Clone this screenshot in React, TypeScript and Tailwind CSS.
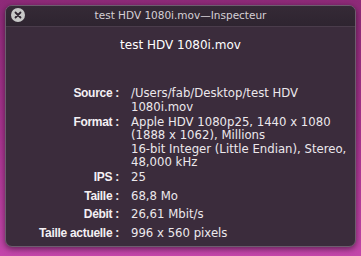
import React from "react";

const rows: { label: string; lines: string[] }[] = [
    { label: "Source :", lines: ["/Users/fab/Desktop/test HDV", "1080i.mov"] },
    { label: "Format :", lines: ["Apple HDV 1080p25, 1440 x 1080", "(1888 x 1062), Millions", "16-bit Integer (Little Endian), Stereo,", "48,000 kHz"] },
    { label: "IPS :", lines: ["25"] },
    { label: "Taille :", lines: ["68,8 Mo"] },
    { label: "Débit :", lines: ["26,61 Mbit/s"] },
    { label: "Taille actuelle :", lines: ["996 x 560 pixels"] },
]

export default function App() {
    return (
        <div className="w-[361px] h-[256px] overflow-hidden bg-gradient-to-b from-[#8e2a78] via-[#a8338f] to-[#c446ab] pt-[5px] px-[5px] font-['DejaVu_Sans',sans-serif]">
            <div className="h-[242px] rounded-[7px] border border-[#6d5d6e] bg-[#3b2c3c] shadow-[0_2px_6px_rgba(0,0,0,0.5)] overflow-hidden">
                {/* title bar */}
                <div className="relative h-[21px] flex items-center justify-center bg-gradient-to-b from-[#352a36] to-[#2e2430] border-b border-[#4a3c4b]">
                    <div className="absolute left-[5px] top-[2px] w-[14px] h-[14px] rounded-full bg-[#c8c8c8] flex items-center justify-center">
                        <svg width="8" height="8" viewBox="0 0 8 8">
                            <path d="M1.5 1.5 L6.5 6.5 M6.5 1.5 L1.5 6.5" stroke="#2e2430" strokeWidth="1.8" strokeLinecap="round" />
                        </svg>
                    </div>
                    <span className="text-[10.5px] leading-[14px] text-[#d6d0d6] -mt-[2px]">test HDV 1080i.mov—Inspecteur</span>
                </div>
                <div className="pt-[10px] text-center text-[12px] leading-[16px] text-white">test HDV 1080i.mov</div>
                <div className="mt-[34px] flex flex-col gap-[1.5px] text-[11.7px] leading-[13.5px] text-[#ece8ec]">
                    {rows.map((r) => (
                        <div key={r.label} className="flex min-h-[17px]">
                            <div className="w-[113px] shrink-0 text-right font-bold whitespace-nowrap font-['Liberation_Sans',sans-serif] text-[12px] tracking-[-0.3px] text-[#f4f0f4]">{r.label}</div>
                            <div className="pl-[12px] whitespace-nowrap">
                                {r.lines.map((l) => (
                                    <div key={l}>{l}</div>
                                ))}
                            </div>
                        </div>
                    ))}
                </div>
            </div>
        </div>
    )
}
